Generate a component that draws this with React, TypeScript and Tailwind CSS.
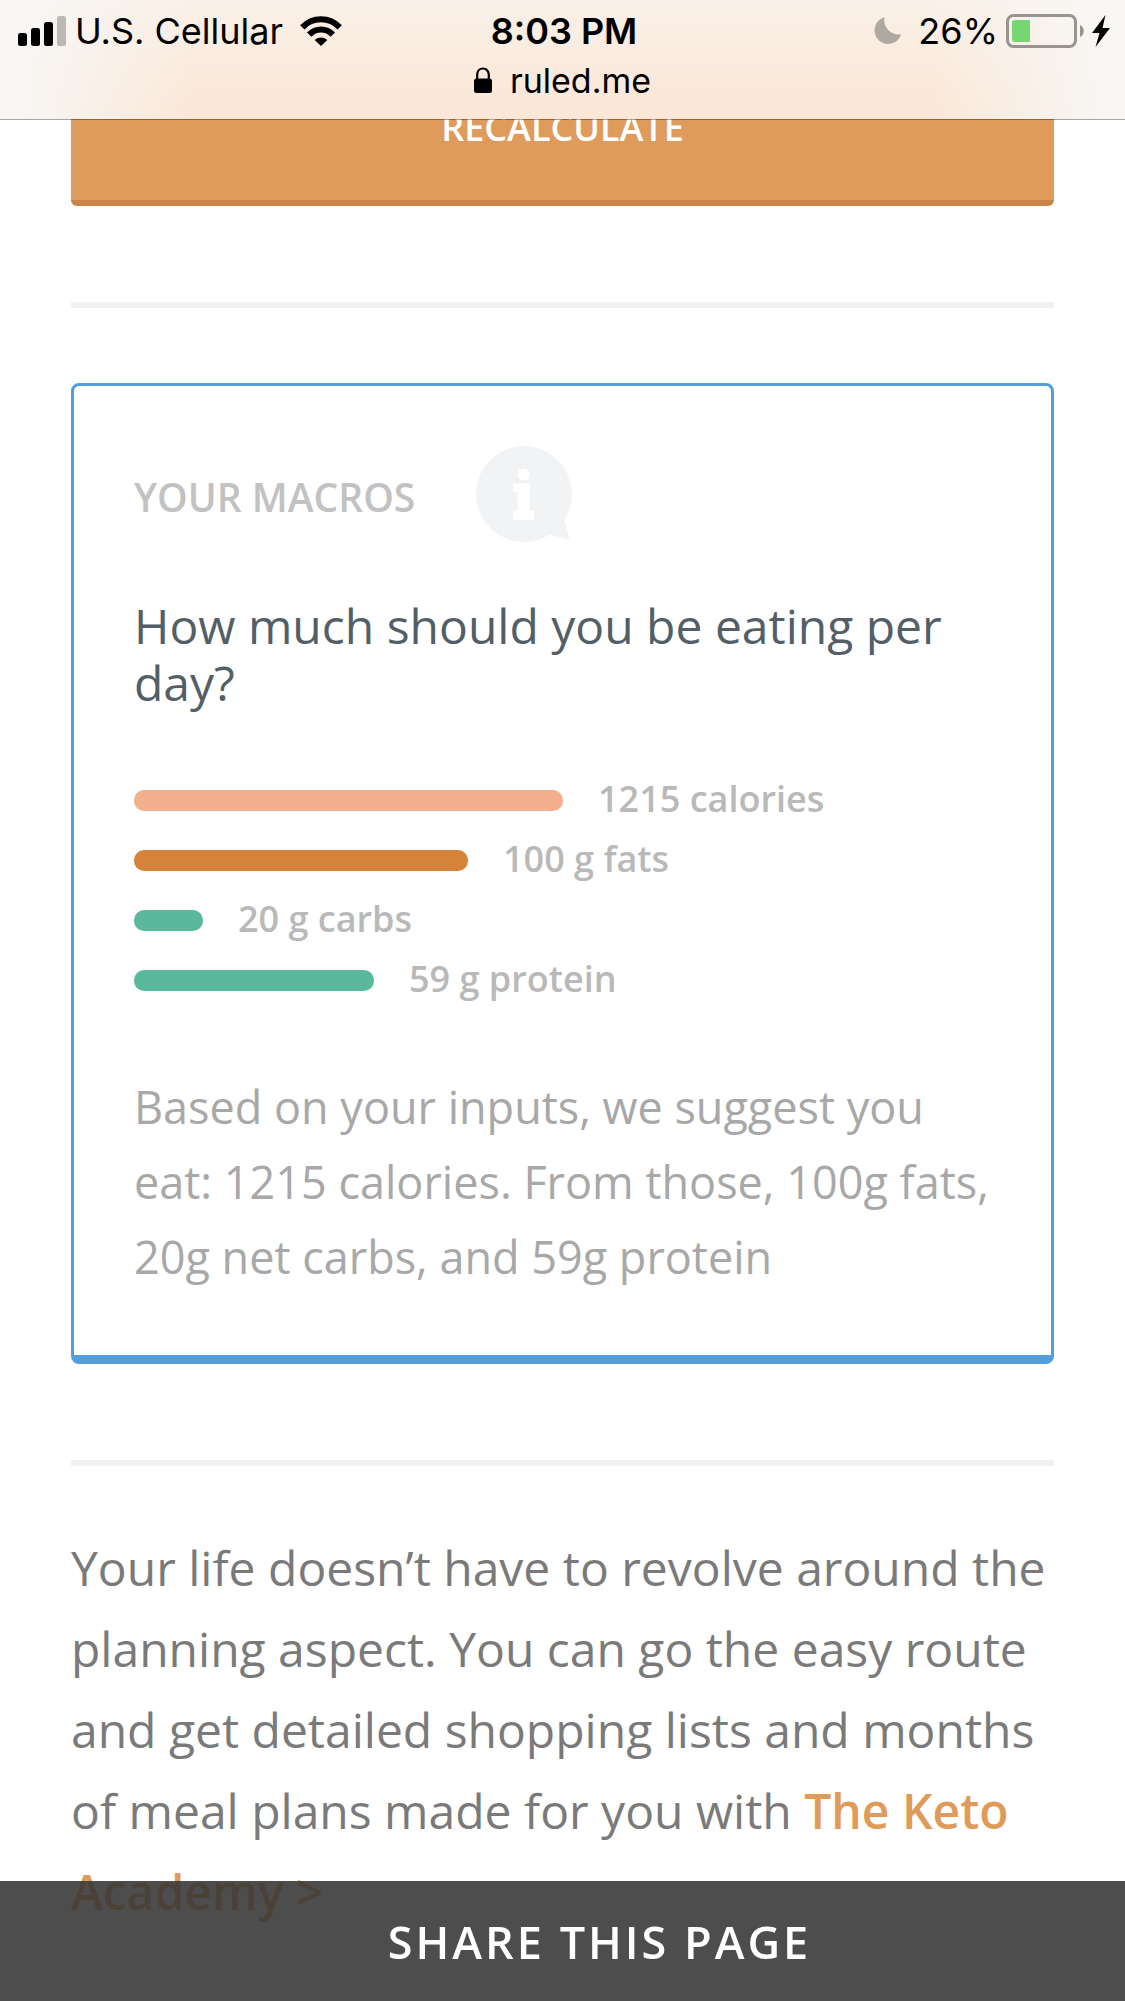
const macros = [
  { label: "1215 calories", width: 429, color: "bg-[#f3b08f]" },
  { label: "100 g fats", width: 334, color: "bg-[#d6823a]" },
  { label: "20 g carbs", width: 69, color: "bg-[#5ab99d]" },
  { label: "59 g protein", width: 240, color: "bg-[#5ab99d]" },
]

function SignalIcon() {
  return (
    <svg width="48" height="30" viewBox="0 0 48 30" aria-hidden="true">
      <rect x="0" y="17" width="9" height="13" rx="2.5" />
      <rect x="13" y="12" width="9" height="18" rx="2.5" />
      <rect x="26" y="6" width="9" height="24" rx="2.5" />
      <rect x="39" y="0" width="9" height="30" rx="2.5" fill="#bcb8b3" />
    </svg>
  )
}

function WifiIcon() {
  return (
    <svg width="42" height="30" viewBox="0 0 42 30" aria-hidden="true">
      <path d="M2.3 11.4A25.5 25.5 0 0 1 39.7 11.4" fill="none" stroke="#000" strokeWidth="6" />
      <path d="M9.2 18.6A16 16 0 0 1 32.8 18.6" fill="none" stroke="#000" strokeWidth="6" />
      <path d="M21 30L14.7 23.9A9.5 9.5 0 0 1 27.3 23.9Z" />
    </svg>
  )
}

function MoonIcon() {
  return (
    <svg width="28" height="28" viewBox="0 0 28 28" aria-hidden="true">
      <path d="M10.5 0.3A13.6 13.6 0 1 0 27.2 17.2A14.2 14.2 0 0 1 10.5 0.3Z" fill="#b0a9a1" />
    </svg>
  )
}

function BatteryIcon() {
  return (
    <svg width="78" height="34" viewBox="0 0 78 34" aria-hidden="true">
      <rect x="1.5" y="1.5" width="68" height="31" rx="6" fill="none" stroke="#98938e" strokeWidth="3" />
      <path d="M9 6H24V28H9A3 3 0 0 1 6 25V9A3 3 0 0 1 9 6Z" fill="#76d672" />
      <path d="M74 11C79 13 79 21 74 23Z" fill="#98938e" />
    </svg>
  )
}

function BoltIcon() {
  return (
    <svg width="18" height="32" viewBox="0 0 18 32" aria-hidden="true">
      <path d="M13.5 0L0 18H7.5L3.5 32L18 13H10.5Z" />
    </svg>
  )
}

function LockIcon() {
  return (
    <svg width="18" height="26" viewBox="0 0 18 26" aria-hidden="true">
      <path d="M3.2 13V8C3.2 -0.7 14.8 -0.7 14.8 8V13" fill="none" stroke="#000" strokeWidth="2.2" />
      <rect y="11.5" width="18" height="14.5" rx="2.5" />
    </svg>
  )
}

function InfoIcon() {
  return (
    <svg width="96" height="96" viewBox="0 0 96 96" aria-hidden="true">
      <g fill="#f1f3f5">
        <circle cx="48" cy="48" r="48" />
        <path d="M88 73L94 94L70 88Z" />
      </g>
      <g fill="#fff">
        <circle cx="47.5" cy="28.5" r="6" />
        <rect x="37" y="37.5" width="17" height="9" />
        <rect x="41.5" y="37.5" width="12.5" height="36.5" />
        <rect x="37" y="65" width="21" height="9" />
      </g>
    </svg>
  )
}

function BrowserHeader() {
  return (
    <header className="fixed inset-x-0 top-0 z-10 h-[120px] border-b border-black/35 bg-[linear-gradient(to_right,#f8f7f5_1%,#f8f7f500_17%,#f8f7f500_83%,#f8f7f5_99%),linear-gradient(to_bottom,#faf1e9,#faebde_50%,#fae7d7)] bg-clip-padding pt-1 font-[Inter,sans-serif] text-[36px] text-black">
      <div className="grid h-[54px] grid-cols-[1fr_auto_1fr] items-center pr-[15px] pl-[18px]">
        <div className="flex items-center gap-[9px]">
          <SignalIcon />
          <span>U.S. Cellular</span>
          <span className="ml-2">
            <WifiIcon />
          </span>
        </div>
        <time className="font-semibold">8:03 PM</time>
        <div className="flex items-center justify-end gap-2">
          <MoonIcon />
          <span className="ml-2">26%</span>
          <BatteryIcon />
          <BoltIcon />
        </div>
      </div>
      <div className="flex h-[44px] items-center justify-center gap-[18px] text-[34px]">
        <LockIcon />
        <span>ruled.me</span>
      </div>
    </header>
  )
}

function MacrosCard() {
  return (
    <section className="mt-[75px] rounded-lg border-[3px] border-b-[9px] border-[#539fdc] px-[60px] pt-[60px] pb-[61px]">
      <div className="flex items-end gap-[61px]">
        <h2 className="text-[39px] leading-[90px] font-semibold text-[#c2c2c2]">YOUR MACROS</h2>
        <InfoIcon />
      </div>
      <h3 className="mt-[55px] text-[48px] leading-[57px] text-[#535f67]">How much should you be eating per day?</h3>
      <ul className="mt-[59px]">
        {macros.map((macro) => (
          <li key={macro.label} className="flex h-[60px] items-center gap-[35px]">
            <div className={`h-[21px] rounded-[10px] ${macro.color}`} style={{ width: macro.width }}></div>
            <span className="pb-[2px] text-[36px] font-semibold text-[#b9b9b9]">{macro.label}</span>
          </li>
        ))}
      </ul>
      <p className="mt-[59px] text-[45px] leading-[75px] text-[#a8a8a8]">
        Based on your inputs, we suggest you eat: 1215 calories. From those, 100g fats, 20g net carbs, and 59g protein
      </p>
    </section>
  )
}

export default function App() {
  return (
    <div className="min-h-screen bg-white font-['Open_Sans',sans-serif]">
      <BrowserHeader />
      <main className="px-[71px] pt-[54px] pb-16">
        <button className="block h-[152px] w-full rounded-md border-b-[6px] border-[#cb8448] bg-[#de9b5c] pt-[2px] text-[36px] font-semibold text-white">
          RECALCULATE
        </button>
        <hr className="mt-24 h-[6px] border-0 bg-[#f2f2f2]" />
        <MacrosCard />
        <hr className="mt-24 h-[6px] border-0 bg-[#f2f2f2]" />
        <p className="mt-[61px] text-[48px] leading-[81px] text-[#7a7a7a]">
          Your life doesn’t have to revolve around the planning aspect. You can go the easy route and get detailed
          shopping lists and months of meal plans made for you with{" "}
          <a href="#academy" className="font-semibold text-[#e09b5b]">
            The Keto Academy &gt;
          </a>
        </p>
      </main>
      <button className="fixed inset-x-0 bottom-0 h-[120px] bg-[#343434]/88 pt-[2px] pl-[74px] text-[45px] font-semibold tracking-[3px] text-white">
        SHARE THIS PAGE
      </button>
    </div>
  )
}
